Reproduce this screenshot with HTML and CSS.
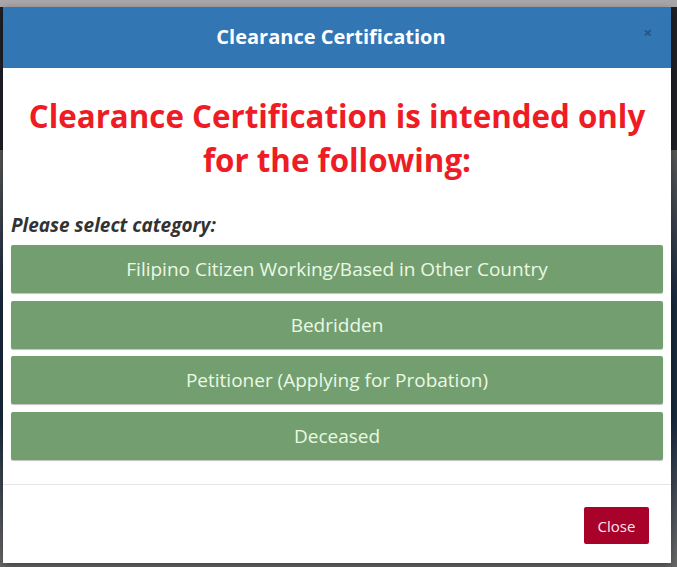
FILE: index.html
```html
<!DOCTYPE html>
<html lang="en">
<head>
<meta charset="utf-8">
<title>Clearance Certification</title>
<link rel="stylesheet" href="styles.css">
</head>
<body>
<div class="backdrop">
  <div class="modal">
    <div class="modal-header">
      <h4 class="modal-title">Clearance Certification</h4>
      <span class="close-x">&times;</span>
    </div>
    <div class="modal-body">
      <h2 class="notice">Clearance Certification is intended only for the following:</h2>
      <p class="prompt">Please select category:</p>
      <div class="options">
        <button class="option">Filipino Citizen Working/Based in Other Country</button>
        <button class="option">Bedridden</button>
        <button class="option">Petitioner (Applying for Probation)</button>
        <button class="option">Deceased</button>
      </div>
    </div>
    <div class="modal-footer">
      <button class="btn-close">Close</button>
    </div>
  </div>
</div>
</body>
</html>
```
FILE: styles.css
```css
* { box-sizing: border-box; }
html, body { margin: 0; padding: 0; }
body {
  width: 677px;
  height: 567px;
  overflow: hidden;
  font-family: "Open Sans", "Liberation Sans", sans-serif;
  background: #6e6e6e;
}
.backdrop {
  height: 567px;
  padding: 7px 6px 4px 3px;
  background: linear-gradient(to bottom, #a9a7a9 0, #a9a7a9 7px, #1f2127 7px, #1f2127 150px, #5a5a5a 150px, #1b2a3f 300px, #1b2a3f 420px, #6a6a6a 560px);
}
.modal {
  background: #fff;
  height: 556px;
  display: flex;
  flex-direction: column;
  box-shadow: 0 3px 9px rgba(0,0,0,0.4);
}
.modal-header {
  position: relative;
  background: #3276b4;
  height: 61px;
  display: flex;
  align-items: center;
  justify-content: center;
  padding-right: 12px;
}
.modal-title {
  margin: 0;
  color: #fff;
  font-size: 20px;
  font-weight: 700;
  line-height: 1;
  padding-bottom: 2px;
}
.close-x {
  position: absolute;
  right: 19px;
  top: 15px;
  color: #1a3f66;
  opacity: 0.6;
  font-size: 15px;
  font-weight: 700;
}
.modal-body {
  padding: 26px 8px 24px 8px;
  border-bottom: 1px solid #e5e5e5;
}
.notice {
  margin: 0 0 31px 0;
  text-align: center;
  color: #ee1c24;
  font-size: 31.3px;
  font-weight: 700;
  line-height: 44px;
  padding: 0 8px;
}
.prompt {
  margin: 0 0 8px 0;
  color: #333;
  font-size: 19px;
  font-weight: 700;
  font-style: italic;
  line-height: 24px;
}
.options {
  display: flex;
  flex-direction: column;
  gap: 7.5px;
}
.option {
  height: 48px;
  border: none;
  border-radius: 2px;
  background: #739f70;
  color: #eaf9e4;
  font-family: "Open Sans", "Liberation Sans", sans-serif;
  font-size: 19px;
  box-shadow: 0 1px 1px rgba(0,0,0,0.25);
  cursor: pointer;
}
.modal-footer {
  flex: 1;
  display: flex;
  justify-content: flex-end;
  align-items: flex-end;
  padding: 0 22px 19px 0;
}
.btn-close {
  width: 65px;
  height: 37px;
  border: none;
  border-radius: 2px;
  background: #a8012a;
  color: #fbe7ea;
  font-family: "Open Sans", "Liberation Sans", sans-serif;
  font-size: 15px;
}
```
